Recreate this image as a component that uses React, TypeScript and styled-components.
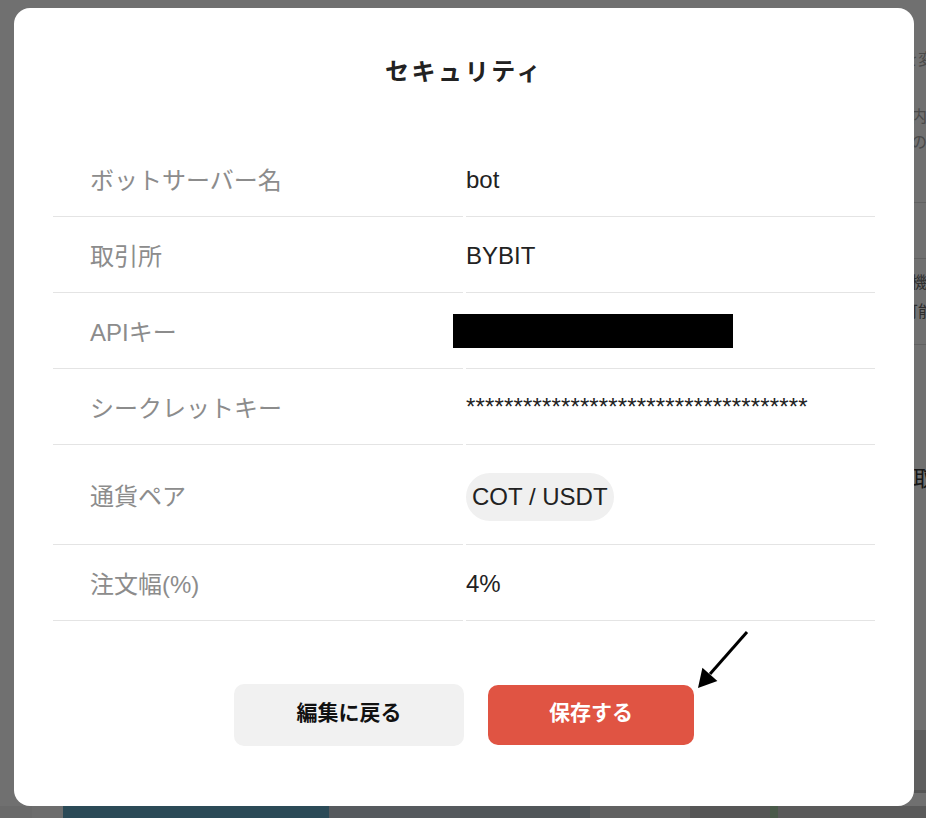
import React from "react";
import styled, { createGlobalStyle } from "styled-components";

interface Field {
  label: string;
  value: React.ReactNode;
  height: number;
}

const SECRET = "*".repeat(36);

const fields: Field[] = [
  { label: "ボットサーバー名", value: "bot", height: 76 },
  { label: "取引所", value: "BYBIT", height: 76 },
  { label: "APIキー", value: "redacted", height: 76 },
  { label: "シークレットキー", value: SECRET, height: 76 },
  { label: "通貨ペア", value: "pair", height: 100 },
  { label: "注文幅(%)", value: "4%", height: 76 },
];

const footerBlocks = [
  { w: 32, c: "#f2f2f2" },
  { w: 31, c: "#f8f8f8" },
  { w: 266, c: "#62a8c6" },
  { w: 131, c: "#c3ced6" },
  { w: 130, c: "#b8c5cb" },
  { w: 100, c: "#dedede" },
  { w: 80, c: "#c5c5c5" },
  { w: 8, c: "#a8cda8" },
  { w: 148, c: "#cdcdcd" },
];

const renderValue = (f: Field) => {
  if (f.value === "redacted") return <Redacted />;
  if (f.value === "pair") return <Pill>COT / USDT</Pill>;
  return <ValueText $secret={f.value === SECRET}>{f.value}</ValueText>;
};

const App: React.FC = () => {
  return (
    <>
      <GlobalStyle />
      <Page>
        <TopArea>
          <SideNotes>
            <Note $top={48} $indent={0}>を変更</Note>
            <Note $top={37} $indent={9}>内容</Note>
            <Note $top={6} $indent={9}>の設定</Note>
            <Rule $top={51} />
            <Rule $top={55} />
            <Note $top={12} $indent={9} $dark>機能</Note>
            <Note $top={9} $indent={0} $dark>可能</Note>
            <Rule $top={24} />
            <BigNote>取引</BigNote>
          </SideNotes>
        </TopArea>
        <GreyBand />
        <Footer>
          {footerBlocks.map((b, i) => (
            <FooterBlock key={i} $w={b.w} $c={b.c} />
          ))}
        </Footer>
      </Page>

      <Overlay>
        <Modal>
          <Title>セキュリティ</Title>
          <Table>
            {fields.map((f) => (
              <React.Fragment key={f.label}>
                <LabelCell $h={f.height}>{f.label}</LabelCell>
                <ValueCell $h={f.height}>{renderValue(f)}</ValueCell>
              </React.Fragment>
            ))}
          </Table>
          <Actions>
            <ActionButton $primary={false}>編集に戻る</ActionButton>
            <ActionButton $primary>保存する</ActionButton>
          </Actions>
          <Arrow width="60" height="66" viewBox="0 0 60 66">
            <line x1="53" y1="4" x2="16" y2="46" stroke="#000" strokeWidth="3" />
            <polygon points="4,60 23.4,53 8.4,39.8" fill="#000" />
          </Arrow>
        </Modal>
      </Overlay>
    </>
  );
};

export default App;

const GlobalStyle = createGlobalStyle`
  html, body {
    margin: 0;
    padding: 0;
    height: 100%;
    overflow: hidden;
  }
  body {
    font-family: "Liberation Sans", "Noto Sans CJK JP", sans-serif;
  }
`;

const Page = styled.div`
  width: 100vw;
  height: 100vh;
  background: #fff;
  display: grid;
  grid-template-rows: 730px 76px 1fr;
  overflow: hidden;
`;

const TopArea = styled.div`
  display: flex;
  padding-left: 902px;
`;

const SideNotes = styled.div`
  flex: 1;
  display: flex;
  flex-direction: column;
  font-family: "Noto Sans CJK JP", sans-serif;
`;

const Note = styled.div<{ $top: number; $indent: number; $dark?: boolean }>`
  margin-top: ${(p) => p.$top}px;
  padding-left: ${(p) => p.$indent}px;
  font-size: 16px;
  line-height: 20px;
  white-space: nowrap;
  color: ${(p) => (p.$dark ? "#6a6a6a" : "#a8a8a8")};
`;

const BigNote = styled.div`
  margin-top: 118px;
  padding-left: 11px;
  font-size: 22px;
  line-height: 26px;
  color: #333;
  white-space: nowrap;
`;

const Rule = styled.div<{ $top: number }>`
  margin-top: ${(p) => p.$top}px;
  height: 1px;
  background: #dcdcdc;
`;

const GreyBand = styled.div`
  margin-left: 880px;
  background: #d8d8d8;
  border-bottom: 3px solid #c1c1c1;
  margin-bottom: 13px;
`;

const Footer = styled.div`
  display: flex;
`;

const FooterBlock = styled.div<{ $w: number; $c: string }>`
  flex: 0 0 ${(p) => p.$w}px;
  background: ${(p) => p.$c};
`;

const Overlay = styled.div`
  position: fixed;
  inset: 0;
  background: rgba(0, 0, 0, 0.56);
  padding: 8px 0 0 14px;
  box-sizing: border-box;
`;

const Modal = styled.div`
  position: relative;
  width: 900px;
  height: 798px;
  box-sizing: border-box;
  background: #fff;
  border-radius: 16px;
  padding: 42px 39px 0;
  display: flex;
  flex-direction: column;
  align-items: center;
`;

const Title = styled.h2`
  margin: 0;
  font-family: "Noto Sans CJK JP", sans-serif;
  font-size: 24px;
  font-weight: 700;
  line-height: 40px;
  letter-spacing: 2.6px;
  color: #222;
`;

const Table = styled.div`
  margin-top: 51px;
  width: 822px;
  display: grid;
  grid-template-columns: 410px 409px;
  column-gap: 3px;
`;

const Cell = styled.div<{ $h: number }>`
  height: ${(p) => p.$h}px;
  box-sizing: border-box;
  border-bottom: 1px solid #e4e4e4;
  display: flex;
  align-items: center;
`;

const LabelCell = styled(Cell)`
  padding-left: 37px;
  font-size: 24px;
  color: #8c8c8c;
`;

const ValueCell = styled(Cell)`
  padding-left: 0;
`;

const ValueText = styled.span<{ $secret: boolean }>`
  margin-top: ${(p) => (p.$secret ? "0" : "3px")};
  font-size: 24px;
  color: #222;
  letter-spacing: ${(p) => (p.$secret ? "0.15px" : "0")};
`;

const Redacted = styled.div`
  width: 280px;
  height: 34px;
  margin-left: -13px;
  background: #000;
`;

const Pill = styled.span`
  display: inline-flex;
  align-items: center;
  height: 48px;
  padding: 0 6px 0 6px;
  margin-top: 4px;
  border-radius: 24px;
  background: #f0f0f0;
  font-size: 24px;
  color: #222;
`;

const Actions = styled.div`
  margin-top: 63px;
  display: flex;
  align-items: center;
  gap: 24px;
`;

const ActionButton = styled.button<{ $primary: boolean }>`
  width: ${(p) => (p.$primary ? 206 : 230)}px;
  height: ${(p) => (p.$primary ? 60 : 62)}px;
  padding: 0 0 8px;
  border: none;
  border-radius: 10px;
  background: ${(p) => (p.$primary ? "#e05443" : "#f1f1f1")};
  color: ${(p) => (p.$primary ? "#fff" : "#111")};
  font-family: "Noto Sans CJK JP", sans-serif;
  font-size: 21px;
  font-weight: 700;
  cursor: pointer;
`;

const Arrow = styled.svg`
  position: absolute;
  left: 680px;
  top: 620px;
`;
